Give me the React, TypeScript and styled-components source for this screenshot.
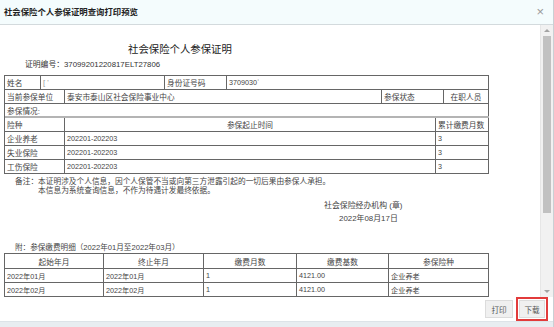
import React, { FC } from "react";
import styled, { createGlobalStyle } from "styled-components";

const GlobalStyle = createGlobalStyle`
  html, body {
    margin: 0;
    padding: 0;
    background: #ffffff;
  }
  body {
    font-family: "Liberation Sans", "Noto Sans CJK SC", sans-serif;
    color: #333;
  }
`;

type Cell = { text: string; align?: "left" | "center"; num?: boolean; muted?: boolean };
type RowData = { cols: string; cells: Cell[]; thick?: boolean };

const infoRows: RowData[] = [
  {
    cols: "36px 124px 62px 1fr",
    cells: [{ text: "姓名" }, { text: "[ '", muted: true }, { text: "身份证号码" }, { text: "3709030ʾ", num: true }],
  },
  {
    cols: "60px 317px 62px 1fr",
    cells: [{ text: "当前参保单位" }, { text: "泰安市泰山区社会保险事业中心" }, { text: "参保状态" }, { text: "在职人员", align: "center" }],
  },
  { cols: "1fr", cells: [{ text: "参保情况:" }], thick: true },
  {
    cols: "60px 371px 1fr",
    cells: [{ text: "险种" }, { text: "参保起止时间", align: "center" }, { text: "累计缴费月数" }],
  },
  {
    cols: "60px 371px 1fr",
    cells: [{ text: "企业养老" }, { text: "202201-202203", num: true }, { text: "3", num: true }],
  },
  {
    cols: "60px 371px 1fr",
    cells: [{ text: "失业保险" }, { text: "202201-202203", num: true }, { text: "3", num: true }],
  },
  {
    cols: "60px 371px 1fr",
    cells: [{ text: "工伤保险" }, { text: "202201-202203", num: true }, { text: "3", num: true }],
  },
];

const detailCols = "99px 100px 93px 92px 1fr";
const detailHead = ["起始年月", "终止年月", "缴费月数", "缴费基数", "参保险种"];
const detailRows = [
  ["2022年01月", "2022年01月", "1", "4121.00", "企业养老"],
  ["2022年02月", "2022年02月", "1", "4121.00", "企业养老"],
];

const App: FC = () => {
  return (
    <>
      <GlobalStyle />
      <Dialog>
        <TitleBar>
          <TitleText>社会保险个人参保证明查询打印预览</TitleText>
          <CloseBtn>×</CloseBtn>
        </TitleBar>

        <Body>
          <Content>
            <DocTitle>社会保险个人参保证明</DocTitle>
            <CertNo>证明编号：37099201220817ELT27806</CertNo>

            <Table>
              {infoRows.map((row, i) => (
                <Row key={i} $cols={row.cols} $thick={row.thick}>
                  {row.cells.map((c, j) => (
                    <TCell key={j} $align={c.align} $num={c.num} $muted={c.muted}>
                      {c.text}
                    </TCell>
                  ))}
                </Row>
              ))}
            </Table>

            <Notes>
              <NoteLabel>备注：</NoteLabel>
              <NoteLines>
                <span>本证明涉及个人信息，因个人保管不当或向第三方泄露引起的一切后果由参保人承担。</span>
                <span>本信息为系统查询信息，不作为待遇计发最终依据。</span>
              </NoteLines>
            </Notes>

            <Stamp>社会保险经办机构 (章)</Stamp>
            <StampDate>2022年08月17日</StampDate>

            <Appendix>附：参保缴费明细（2022年01月至2022年03月）</Appendix>
            <Table>
              <Row $cols={detailCols} $head>
                {detailHead.map((h) => (
                  <TCell key={h} $align="center">{h}</TCell>
                ))}
              </Row>
              {detailRows.map((r, i) => (
                <Row key={i} $cols={detailCols}>
                  {r.map((v, j) => (
                    <TCell key={j} $num>{v}</TCell>
                  ))}
                </Row>
              ))}
            </Table>
          </Content>

          <ScrollBar>
            <ArrowUp />
            <Thumb />
            <Track />
            <ArrowDown />
          </ScrollBar>
        </Body>

        <Footer>
          <FootBtn>打印</FootBtn>
          <FootBtn $marked>下载</FootBtn>
        </Footer>
        <BottomStrip />
      </Dialog>
    </>
  );
};

export default App;

const Dialog = styled.div`
  width: 554px;
  height: 327px;
  box-sizing: border-box;
  border-right: 1px solid #c9d0d4;
  display: flex;
  flex-direction: column;
  overflow: hidden;
  background: #fff;
`;

const TitleBar = styled.div`
  height: 25px;
  flex-shrink: 0;
  box-sizing: border-box;
  border-bottom: 1px solid #d3dadd;
  background: #f4fcfd;
  display: flex;
  align-items: center;
  justify-content: space-between;
  padding: 0 9px 0 4px;
`;

const TitleText = styled.div`
  font-size: 8.4px;
  font-weight: bold;
  color: #222;
  line-height: 12px;
`;

const CloseBtn = styled.div`
  font-size: 13px;
  color: #9a9a9a;
  line-height: 12px;
`;

const Body = styled.div`
  height: 272px;
  flex-shrink: 0;
  display: flex;
`;

const Content = styled.div`
  flex: 1;
  overflow: hidden;
  padding: 19px 0 0 4px;
  display: flex;
  flex-direction: column;
  align-items: flex-start;
`;

const DocTitle = styled.div`
  font-size: 10.4px;
  line-height: 12px;
  color: #222;
  padding-left: 124px;
`;

const CertNo = styled.div`
  font-size: 7.8px;
  line-height: 10px;
  color: #333;
  margin: 4px 0 5px 21px;
`;

const Table = styled.div`
  width: 485px;
  flex-shrink: 0;
  box-sizing: border-box;
  border-top: 1px solid #666;
  border-left: 1px solid #666;
`;

const Row = styled.div<{ $cols: string; $thick?: boolean; $head?: boolean }>`
  display: grid;
  grid-template-columns: ${(p) => p.$cols};
  height: ${(p) => (p.$head ? "15px" : "14px")};
  box-sizing: border-box;
  border-bottom: ${(p) => (p.$thick ? "2px solid #b4b4b4" : "1px solid #666")};
`;

const TCell = styled.div<{ $align?: "left" | "center"; $num?: boolean; $muted?: boolean }>`
  border-right: 1px solid #666;
  padding: 0 2px;
  display: flex;
  align-items: center;
  justify-content: ${(p) => (p.$align === "center" ? "center" : "flex-start")};
  font-size: ${(p) => (p.$num ? "7.2px" : "7.7px")};
  color: ${(p) => (p.$muted ? "#999" : "#444")};
  white-space: nowrap;
  overflow: hidden;
`;

const Notes = styled.div`
  display: flex;
  margin: 3px 0 0 11px;
  font-size: 7.7px;
  line-height: 9px;
  color: #444;
`;

const NoteLabel = styled.span`
  white-space: nowrap;
`;

const NoteLines = styled.div`
  display: flex;
  flex-direction: column;
  white-space: nowrap;
`;

const Stamp = styled.div`
  font-size: 7.9px;
  line-height: 10px;
  color: #444;
  margin: 6px 0 0 320px;
`;

const StampDate = styled.div`
  font-size: 7.9px;
  line-height: 10px;
  color: #444;
  margin: 3px 0 0 335px;
`;

const Appendix = styled.div`
  font-size: 7.6px;
  line-height: 8px;
  color: #444;
  margin: 20px 0 1px 11px;
`;

const ScrollBar = styled.div`
  width: 12px;
  flex-shrink: 0;
  background: #f1f1f1;
  border-left: 1px solid #e6e6e6;
  display: flex;
  flex-direction: column;
  align-items: center;
`;

const ArrowUp = styled.div`
  margin-top: 4px;
  width: 0;
  height: 0;
  border-left: 3px solid transparent;
  border-right: 3px solid transparent;
  border-bottom: 3px solid #a3a3a3;
`;

const Thumb = styled.div`
  margin-top: 4px;
  width: 8px;
  height: 177px;
  background: #c1c1c1;
`;

const Track = styled.div`
  flex: 1;
`;

const ArrowDown = styled.div`
  margin-bottom: 4px;
  width: 0;
  height: 0;
  border-left: 3px solid transparent;
  border-right: 3px solid transparent;
  border-top: 3px solid #a3a3a3;
`;

const Footer = styled.div`
  flex: 1;
  display: flex;
  justify-content: flex-end;
  align-items: center;
  gap: 6px;
  padding-right: 8px;
`;

const FootBtn = styled.div<{ $marked?: boolean }>`
  height: 18px;
  width: ${(p) => (p.$marked ? "26px" : "28px")};
  box-sizing: border-box;
  background: #f0f0f0;
  border: 1px solid #dcdcdc;
  font-size: 7.6px;
  color: #555;
  display: flex;
  align-items: center;
  justify-content: center;
  outline: ${(p) => (p.$marked ? "2px solid #e23b3b" : "none")};
  outline-offset: 1px;
`;

const BottomStrip = styled.div`
  height: 5px;
  flex-shrink: 0;
  background: #e8edf1;
  border-top: 1px solid #dde3e8;
`;
